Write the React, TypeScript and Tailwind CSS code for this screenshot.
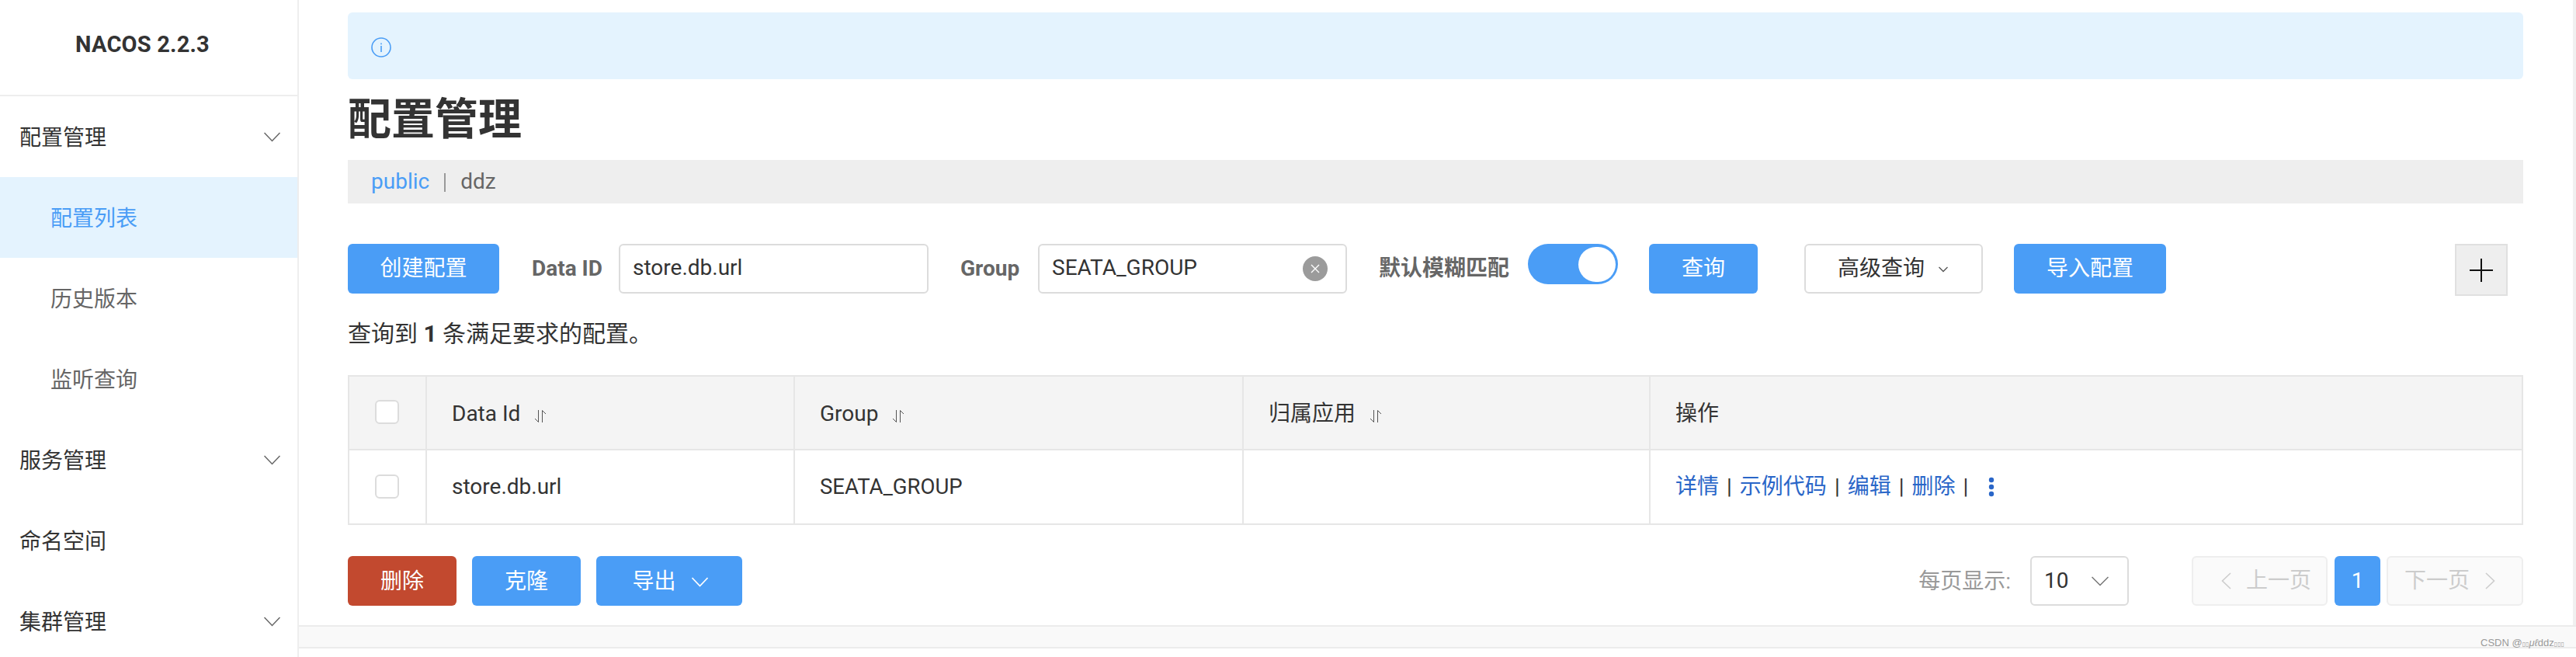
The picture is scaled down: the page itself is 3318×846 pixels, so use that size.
import React from "react";

const Chevron = ({ w = 21, h = 11, color = "#666", sw = 1.5, className = "" }: { w?: number; h?: number; color?: string; sw?: number; className?: string }) => (
  <svg width={w} height={h + 2} viewBox={`0 0 ${w} ${h + 2}`} fill="none" className={className}>
    <polyline points={`0.5,1 ${w / 2},${h + 0.5} ${w - 0.5},1`} stroke={color} strokeWidth={sw} />
  </svg>
);

const SortIcon = () => (
  <svg width="16" height="18" viewBox="0 0 16 18" fill="none" className="ml-[18px] mt-[6px]">
    <path d="M5.5 1V16.5L1 12" stroke="#555" strokeWidth="1" />
    <path d="M10.5 17V1.5L15 6" stroke="#555" strokeWidth="1" />
  </svg>
);

const Checkbox = () => <div className="w-[31px] h-[31px] rounded-[6px] border-2 border-[#dcdcdc] bg-white -mt-[2px]" />;

const Btn = ({ children, className = "" }: { children: React.ReactNode; className?: string }) => (
  <div className={`h-16 rounded-[6px] bg-[#4a9df6] text-white flex items-center justify-center shrink-0 ${className}`}>{children}</div>
);

const Side = ({ label, sub, active, arrow }: { label: string; sub?: boolean; active?: boolean; arrow?: boolean }) => (
  <div
    className={`h-[104px] shrink-0 flex items-center justify-between pr-[22px] ${sub ? "pl-[65px]" : "pl-[25px]"} ${
      active ? "bg-[#e4f3fe] text-[#4a9df6]" : sub ? "text-[#666]" : "text-[#333]"
    }`}
  >
    <span className="mt-[3px]">{label}</span>
    {arrow && <Chevron />}
  </div>
);

const Sep = () => <span className="text-[#333] mx-[10px]">|</span>;
const Link = ({ children }: { children: React.ReactNode }) => <span className="text-[#2a66c8]">{children}</span>;

export default function App() {
  return (
    <div className="w-[3318px] h-[846px] overflow-hidden bg-white flex text-[28px] leading-none text-[#333] font-['Roboto','Noto_Sans_CJK_SC',sans-serif]">
      <aside className="w-[385px] h-[846px] shrink-0 border-r-2 border-[#eee] flex flex-col overflow-hidden">
        <div className="h-[124px] shrink-0 border-b-2 border-[#eee] flex justify-center pt-[43px] pr-[16px] font-bold text-[29px] tracking-[0.2px]">NACOS 2.2.3</div>
        <Side label="配置管理" arrow />
        <Side label="配置列表" sub active />
        <Side label="历史版本" sub />
        <Side label="监听查询" sub />
        <Side label="服务管理" arrow />
        <Side label="命名空间" />
        <Side label="集群管理" arrow />
      </aside>

      <main className="flex-1 flex flex-col min-w-0 h-[846px]">
        <div className="h-[805px] shrink-0 flex flex-col pl-[63px] pr-[64px] pt-4 border-r-4 border-[#f0f0f0]">
          <div className="h-[86px] shrink-0 rounded-[6px] bg-[#e4f3fe] flex items-center pl-[30px] pt-[1px]">
            <svg width="26" height="26" viewBox="0 0 26 26" fill="none" className="mt-[2px]">
              <circle cx="13" cy="13" r="12" stroke="#4a9df6" strokeWidth="1.6" />
              <rect x="12.2" y="11" width="1.6" height="8" fill="#4a9df6" />
              <rect x="12.2" y="7.5" width="1.6" height="1.8" fill="#4a9df6" />
            </svg>
          </div>
          <h1 className="mt-[24px] h-[56px] shrink-0 text-[56px] leading-[56px] font-bold text-[#333]">配置管理</h1>
          <div className="mt-[24px] h-[56px] shrink-0 bg-[#eee] flex items-center pl-[30px] text-[#666]">
            <span className="text-[#4a9df6]">public</span>
            <span className="w-[2px] h-6 bg-[#999] mx-[19px] mt-[2px]" />
            <span>ddz</span>
          </div>

          <div className="mt-[52px] h-16 shrink-0 flex items-start">
            <Btn className="w-[195px]">创建配置</Btn>
            <span className="ml-[42px] h-16 flex items-center font-bold text-[#666] w-[112px] shrink-0">Data ID</span>
            <div className="w-[399px] h-16 shrink-0 border-2 border-[#dcdcdc] rounded-[6px] flex items-center pl-[16px] pb-[2px]">store.db.url</div>
            <span className="ml-[41px] h-16 flex items-center font-bold text-[#666] w-[100px] shrink-0">Group</span>
            <div className="w-[398px] h-16 shrink-0 border-2 border-[#dcdcdc] rounded-[6px] flex items-center pl-[16px] pr-[23px] justify-between pb-[2px]">
              <span>SEATA_GROUP</span>
              <span className="w-8 h-8 rounded-full bg-[#9b9b9b] flex items-center justify-center mt-[2px]">
                <svg width="12" height="12" viewBox="0 0 12 12" fill="none">
                  <path d="M1 1L11 11M11 1L1 11" stroke="#fff" strokeWidth="1.4" />
                </svg>
              </span>
            </div>
            <span className="ml-[41px] h-16 flex items-center font-bold text-[#666] w-[192px] shrink-0">默认模糊匹配</span>
            <div className="w-[116px] h-[52px] shrink-0 rounded-full bg-[#4a9df6] flex items-center justify-end pr-[3px]">
              <span className="w-12 h-[45px] rounded-full bg-white" />
            </div>
            <Btn className="w-[140px] ml-[40px]">查询</Btn>
            <div className="w-[230px] ml-[60px] h-16 shrink-0 border-2 border-[#dcdcdc] rounded-[6px] flex items-center pl-[41px]">
              <span>高级查询</span>
              <Chevron w={12} h={6} color="#555" sw={1.3} className="ml-[18px] mt-[2px]" />
            </div>
            <Btn className="w-[196px] ml-[40px]">导入配置</Btn>
            <div className="ml-[372px] w-[68px] h-[67px] shrink-0 bg-[#eee] border-2 border-[#e0e0e0] flex items-center justify-center">
              <svg width="32" height="32" viewBox="0 0 32 32">
                <path d="M16 1V31M1 16H31" stroke="#111" strokeWidth="2" />
              </svg>
            </div>
          </div>

          <div className="mt-[37px] h-[30px] shrink-0 text-[30px] text-[#333]">
            查询到 <b>1</b> 条满足要求的配置。
          </div>

          <div className="mt-[38px] shrink-0 w-[2802px] border-2 border-[#e6e6e6]">
            <div className="h-[95px] bg-[#f4f4f4] border-b-2 border-[#e6e6e6] flex items-center">
              <div className="w-[100px] h-full shrink-0 border-r-2 border-[#e6e6e6] flex items-center justify-center pr-[2px]"><Checkbox /></div>
              <div className="w-[474px] h-full shrink-0 border-r-2 border-[#e6e6e6] flex items-center pl-[32px] pt-[2px]">Data Id<SortIcon /></div>
              <div className="w-[578px] h-full shrink-0 border-r-2 border-[#e6e6e6] flex items-center pl-[32px] pt-[2px]">Group<SortIcon /></div>
              <div className="w-[524px] h-full shrink-0 border-r-2 border-[#e6e6e6] flex items-center pl-[32px] pt-[2px]">归属应用<SortIcon /></div>
              <div className="flex-1 h-full flex items-center pl-[32px] pt-[2px]">操作</div>
            </div>
            <div className="h-[94px] flex items-center">
              <div className="w-[100px] h-full shrink-0 border-r-2 border-[#e6e6e6] flex items-center justify-center pr-[2px]"><Checkbox /></div>
              <div className="w-[474px] h-full shrink-0 border-r-2 border-[#e6e6e6] flex items-center pl-[32px]">store.db.url</div>
              <div className="w-[578px] h-full shrink-0 border-r-2 border-[#e6e6e6] flex items-center pl-[32px] text-[27.5px]">SEATA_GROUP</div>
              <div className="w-[524px] h-full shrink-0 border-r-2 border-[#e6e6e6]" />
              <div className="flex-1 h-full flex items-center pl-[32px]">
                <Link>详情</Link><Sep /><Link>示例代码</Link><Sep /><Link>编辑</Link><Sep /><Link>删除</Link><Sep />
                <svg width="8" height="28" viewBox="0 0 8 28" className="ml-[16px]">
                  <circle cx="4" cy="5" r="3.2" fill="#2a66c8" />
                  <circle cx="4" cy="14" r="3.2" fill="#2a66c8" />
                  <circle cx="4" cy="23" r="3.2" fill="#2a66c8" />
                </svg>
              </div>
            </div>
          </div>

          <div className="mt-[40px] h-16 shrink-0 w-[2802px] flex items-start">
            <Btn className="w-[140px] !bg-[#c2492f] pt-[2px]">删除</Btn>
            <Btn className="w-[140px] ml-[20px] pt-[2px]">克隆</Btn>
            <Btn className="w-[188px] ml-[20px] pl-[2px] pt-[2px]">
              导出
              <Chevron w={21} h={11} color="#fff" sw={1.6} className="ml-[20px]" />
            </Btn>
            <span className="ml-auto h-16 flex items-center text-[#999] mr-[25px] pt-[2px]">每页显示:</span>
            <div className="w-[127px] h-16 border-2 border-[#dcdcdc] rounded-[6px] flex items-center pl-[16px] shrink-0">
              <span className="w-[61px]">10</span>
              <Chevron w={22} h={11} color="#777" />
            </div>
            <div className="ml-[81px] w-[175px] h-16 border-2 border-[#eee] bg-[#fafafa] rounded-[6px] flex items-center pl-[36px] text-[#ccc] shrink-0">
              <svg width="13" height="22" viewBox="0 0 13 22" fill="none"><polyline points="12,1 1.5,11 12,21" stroke="#ccc" strokeWidth="1.6" /></svg>
              <span className="ml-[19px]">上一页</span>
            </div>
            <Btn className="w-[59px] ml-[9px] text-[28px]">1</Btn>
            <div className="ml-[8px] w-[176px] h-16 border-2 border-[#eee] bg-[#fafafa] rounded-[6px] flex items-center pl-[21px] text-[#ccc] shrink-0">
              <span>下一页</span>
              <svg width="13" height="22" viewBox="0 0 13 22" fill="none" className="ml-[20px]"><polyline points="1,1 11.5,11 1,21" stroke="#ccc" strokeWidth="1.6" /></svg>
            </div>
          </div>
        </div>

        <div className="h-[30px] shrink-0 bg-[#f9f9f9] border-y-2 border-[#ececec] flex justify-end items-start pr-[15px] pt-[14px]">
          <span className="text-[13px] leading-[14px] text-[#999] whitespace-nowrap font-['Liberation_Sans','DejaVu_Sans',sans-serif]">
            CSDN @<span className="text-[8px]">▯▯</span><i>μℓ</i>ddz<span className="text-[8px]">▯▯▯</span>
          </span>
        </div>
      </main>
    </div>
  );
}
